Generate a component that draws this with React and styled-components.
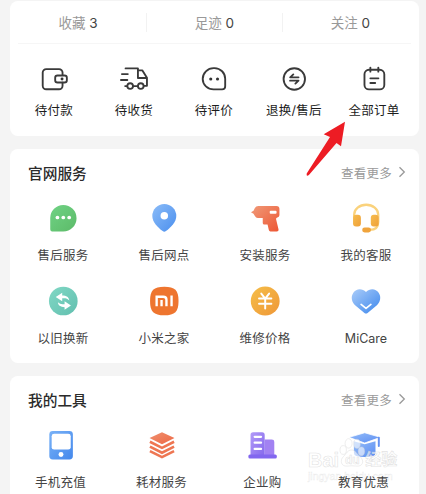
import React from 'react';
import styled, { createGlobalStyle } from 'styled-components';

const GlobalStyle = createGlobalStyle`
  * {
    box-sizing: border-box;
  }

  body {
    margin: 0;
    background: #f4f4f4;
    font-family: "Liberation Sans", "Noto Sans CJK SC", sans-serif;
    overflow: hidden;
  }
`;

// order icons, dark outlines
const WalletIcon = () => (
  <Outline>
    <path d="M25 12V9.8a3.6 3.6 0 0 0-3.6-3.6H8.4a3.6 3.6 0 0 0-3.6 3.6v13.4a3.6 3.6 0 0 0 3.6 3.6h13a3.6 3.6 0 0 0 3.6-3.6V20" />
    <rect x="17.5" y="12.7" width="11.9" height="7.2" rx="2.4" />
    <circle cx="24.5" cy="16.3" r="1.5" fill="#333" stroke="none" />
  </Outline>
);

const TruckIcon = () => (
  <Outline>
    <path d="M7.7 5.5h12.6v9.8H29M20.3 7.5h4.4l4.8 7.6v8.2h-3M7.3 23.5h1.8M15.5 23.5h4.5M4 11.3h6M3 17.3h6.5" />
    <circle cx="12.4" cy="23.5" r="2.9" />
    <circle cx="23.2" cy="23.5" r="2.9" />
  </Outline>
);

const CommentIcon = () => (
  <Outline>
    <path d="M16.9 5.2h-1A11.1 11.1 0 0 0 4.8 16.3c0 6 5 10.6 11.1 10.6h8.6a3.2 3.2 0 0 0 3.2-3.2v-7.6A10.9 10.9 0 0 0 16.9 5.2z" />
    <circle cx="13" cy="16.3" r="1.6" fill="#333" stroke="none" />
    <circle cx="19.9" cy="16.3" r="1.6" fill="#333" stroke="none" />
  </Outline>
);

const RefundIcon = () => (
  <Outline>
    <circle cx="16.6" cy="16.3" r="10.9" />
    <path d="M20.9 14.6h-8.5l3.2-3M12.3 18h8.6l-3.2 3" />
  </Outline>
);

const OrdersIcon = () => (
  <Outline>
    <rect x="6.6" y="6.9" width="20.2" height="20" rx="4.6" />
    <path d="M12.6 4.7v4.1M20.7 4.7v4.1M12.6 15.6h8.2M12.6 20.4h4.9" />
  </Outline>
);

// coloured service icons
const Fill = ({ id, from, to, children }) => (
  <Glyph>
    <defs>
      <linearGradient id={id} x1="0" y1="0" x2="1" y2="1">
        <stop offset="0" stopColor={from} />
        <stop offset="1" stopColor={to} />
      </linearGradient>
    </defs>
    {children}
  </Glyph>
);

const ChatIcon = () => (
  <Fill id="chat" from="#70d385" to="#5cba68">
    <path d="M16.6 3A13.4 13.4 0 0 0 3.3 16.4v11.2C3.3 29 3.9 30 5.3 30h11.3a13.5 13.5 0 0 0 0-27z" fill="url(#chat)" />
    <g fill="#fff">
      <circle cx="10.6" cy="15.8" r="1.9" />
      <circle cx="16.6" cy="15.8" r="1.9" />
      <circle cx="22.6" cy="15.8" r="1.9" />
    </g>
  </Fill>
);

const PinIcon = () => (
  <Fill id="pin" from="#8bbcf8" to="#4b8fee">
    <path d="M16.6 2A12.2 12.2 0 0 0 4.4 14.2c0 6.2 5.6 11.7 10.5 15.4q1.7 1.2 3.4 0c4.9-3.7 10.5-9.2 10.5-15.4A12.2 12.2 0 0 0 16.6 2z" fill="url(#pin)" />
    <circle cx="16.6" cy="14" r="3.8" fill="#fff" />
  </Fill>
);

const DrillIcon = () => (
  <Fill id="drill" from="#f09a78" to="#ed5634">
    <g transform="translate(2 0)">
      <path d="M7.5 4H26q3 0 3 3v6.5q0 2-2.6 2.5-1 .4-.8 1.5l2.5 10.500q.3 2-1.8 2h-6.500q-1.300 0-1.600-1.500l-1.300-5.600h-3.300q-1.600 0-1.600-1.600v-5H7q-2 0-3-2L2.600 12 0 10.500 2.600 9 4 6q1-2 3.500-2z" fill="url(#drill)" />
      <rect x="19.1" y="9" width="7" height="2.9" rx="1" fill="#fff" />
    </g>
  </Fill>
);

const HeadsetIcon = () => (
  <Fill id="headset" from="#f6bd4e" to="#efa039">
    <path d="M4.2 15v-2a12.3 10.2 0 0 1 24.6 0v7.5c0 5.5-3.5 8-8.5 8" fill="none" stroke="#fad27c" strokeWidth="2.3" />
    <rect x="3.1" y="13" width="8" height="12" rx="3" fill="url(#headset)" />
    <rect x="21.2" y="13" width="8" height="12" rx="3" fill="url(#headset)" />
    <rect x="12.4" y="26" width="9" height="5" rx="2.5" fill="#f0a43c" />
  </Fill>
);

const SwapIcon = () => (
  <Fill id="swap" from="#81d8c5" to="#62bfaf">
    <circle cx="16.6" cy="16.3" r="14.6" fill="url(#swap)" />
    <path d="M8.9 12.3l6.6-4.4v2.7c4.3.1 7 1.8 7.2 5.2-1.7-2-4-2.5-7.2-2.2v3zM24.4 20.8l-6.5 4.3v-2.4c-4.2-.2-6.6-1.8-6.8-5 1.8 1.8 3.8 2.2 6.8 1.8v-2.9z" fill="#fff" />
  </Fill>
);

const MiIcon = () => (
  <Glyph>
    <path d="M16.6 1.8C27.5 1.8 31.1 5.4 31.1 16.3S27.5 30.9 16.6 30.9 2.1 27.2 2.1 16.3 5.7 1.8 16.6 1.8z" fill="#ee752f" />
    <path d="M8.8 21.7V12h6.7q3.3 0 3.3 3v6.7M13.8 15.2v6.5M24 10.8v10.9" fill="none" stroke="#fff" strokeWidth="2.4" />
  </Glyph>
);

const YuanIcon = () => (
  <Fill id="yuan" from="#f5be49" to="#ef9737">
    <circle cx="16.5" cy="16.3" r="14.7" fill="url(#yuan)" />
    <path d="M12.5 8.8l4 5 4-5M10.2 13.8h12.6M10.2 19h12.6M16.5 14v10" fill="none" stroke="#fff" strokeWidth="2" strokeLinecap="round" strokeLinejoin="round" />
  </Fill>
);

const HeartIcon = () => (
  <Fill id="heart" from="#aaccf9" to="#3c87ed">
    <path d="M16.3 7.2C12.3 2.8 6.2 3.6 3.4 7.8.4 12.3 1.8 17.3 5.5 20.8l9.2 7.6q1.6 1.3 3.2 0l9.2-7.6c3.7-3.5 5.1-8.5 2.1-13C26.4 3.6 20.3 2.8 16.3 7.2z" fill="url(#heart)" />
    <path d="M11.3 19.8l5 4.1 5-4.1" fill="none" stroke="#fff" strokeWidth="1.7" strokeLinecap="round" strokeLinejoin="round" />
  </Fill>
);

const PhoneIcon = () => (
  <Fill id="phone" from="#79b2f7" to="#4488ec">
    <rect x="4.4" y="2" width="24" height="29" rx="3.5" fill="url(#phone)" />
    <rect x="6.8" y="4.8" width="19.4" height="16.2" rx="2.5" fill="#fff" />
    <circle cx="16.3" cy="26" r="2.5" fill="#fff" />
  </Fill>
);

const LayersIcon = () => (
  <Fill id="layers" from="#ef9170" to="#ee6743">
    <path d="M16.3 3.2L29 9.2l-12.7 6.3L3.6 9.2z" fill="url(#layers)" />
    <path d="M4 13l12.3 6.2L28.6 13M4 18l12.3 6.2L28.6 18M4 22.6l12.3 6 12.3-6" fill="none" stroke="#ee7652" strokeWidth="2.6" />
  </Fill>
);

const BuildingIcon = () => (
  <Fill id="building" from="#b29af8" to="#8468ec">
    <path d="M18 10.8h7.3q2.5 0 2.5 2.5V28H18z" fill="#a282f2" />
    <path d="M3.6 28V5.8q0-2.6 2.6-2.6h9.2Q18 3.2 18 5.8V28z" fill="url(#building)" />
    <path d="M7.8 8h6.5M7.8 14h6.5M7.8 20.3h6.5" stroke="#fff" strokeWidth="2.3" strokeLinecap="round" />
    <rect x="1.4" y="26" width="29" height="4" rx="1.6" fill="#8267ef" />
  </Fill>
);

const HatIcon = () => (
  <Fill id="hat" from="#94bdf9" to="#5c8df2">
    <path d="M6 12.5l11 3 11-3V24q0 3-2.5 3.5-8.5 2-17 0Q6 27 6 24z" fill="url(#hat)" />
    <path d="M17 3.8l16 4.7-16 5.8L1 8.5z" fill="url(#hat)" stroke="#fff" strokeWidth=".8" />
    <path d="M31.4 9v8.3" stroke="#6592f1" strokeWidth="2" strokeLinecap="round" />
  </Fill>
);

const stats = [
  { name: '收藏', value: 3 },
  { name: '足迹', value: 0 },
  { name: '关注', value: 0 },
];

const orders = [
  { name: '待付款', Icon: WalletIcon },
  { name: '待收货', Icon: TruckIcon },
  { name: '待评价', Icon: CommentIcon },
  { name: '退换/售后', Icon: RefundIcon },
  { name: '全部订单', Icon: OrdersIcon },
];

const services = [
  { name: '售后服务', Icon: ChatIcon },
  { name: '售后网点', Icon: PinIcon },
  { name: '安装服务', Icon: DrillIcon },
  { name: '我的客服', Icon: HeadsetIcon },
  { name: '以旧换新', Icon: SwapIcon },
  { name: '小米之家', Icon: MiIcon },
  { name: '维修价格', Icon: YuanIcon },
  { name: 'MiCare', Icon: HeartIcon, latin: true },
];

const tools = [
  { name: '手机充值', Icon: PhoneIcon },
  { name: '耗材服务', Icon: LayersIcon },
  { name: '企业购', Icon: BuildingIcon },
  { name: '教育优惠', Icon: HatIcon },
];

const Section = ({ title, items, inset }) => (
  <Card>
    <Header>
      <Title>{title}</Title>
      <More>
        查看更多
        <Chevron viewBox="0 0 8 12">
          <path d="M1.5 1.2L6.3 6l-4.8 4.8" />
        </Chevron>
      </More>
    </Header>
    <ServiceGrid $inset={inset}>
      {items.map(({ name, Icon, latin }) => (
        <Service key={name}>
          <Icon />
          <Label $latin={latin}>{name}</Label>
        </Service>
      ))}
    </ServiceGrid>
  </Card>
);

// the watermark in the bottom right corner
const Watermark = () => (
  <Mark>
    <MarkTop>
      <MarkText>Bai</MarkText>
      <Paw viewBox="0 0 26 30">
        <ellipse cx="4.2" cy="12" rx="3.2" ry="4.4" />
        <ellipse cx="9.6" cy="5.4" rx="3.5" ry="4.7" />
        <ellipse cx="18" cy="5.8" rx="3.3" ry="4.6" />
        <ellipse cx="22.4" cy="13.3" rx="3.2" ry="4.4" />
        <path d="M12.5 12c4 0 5 3.5 8.5 6.5 5 4.5 2.5 10-3 9.6-3.8-.4-6.8-.4-10 0-6 .5-7.5-5.8-3.5-9.6C7.5 15.5 8.5 12 12.5 12z" />
        <text x="6" y="25.5">du</text>
      </Paw>
      <MarkText $small>经验</MarkText>
    </MarkTop>
    <MarkUrl>jingyan.baidu.com</MarkUrl>
  </Mark>
);

const App = () => (
  <>
    <GlobalStyle />
    <Page>
      <Card>
        <Stats>
          {stats.map(({ name, value }) => (
            <Stat key={name}>
              {name} <Value>{value}</Value>
            </Stat>
          ))}
        </Stats>
        <Divider />
        <Orders>
          {orders.map(({ name, Icon }) => (
            <Order key={name}>
              <Icon />
              <Label $dark>{name}</Label>
            </Order>
          ))}
        </Orders>
      </Card>
      <Section title="官网服务" items={services} inset="2.5px" />
      <Section title="我的工具" items={tools} inset="0" />
      <Arrow viewBox="0 0 44 60">
        <path d="M40 1.8L18.7 14.3l6.3 2.7L1.7 53.5q-.6 3.5 2.2 1.6L31.5 23l4.5 3.3z" />
      </Arrow>
      <Watermark />
    </Page>
  </>
);

const Page = styled.main`
  position: relative;
  width: 426px;
  height: 494px;
  padding: 1px 7px 0 10px;
  display: flex;
  flex-direction: column;
  gap: 13px;
  overflow: hidden;
`;

const Card = styled.section`
  flex-shrink: 0;
  background: #fff;
  border-radius: 8px;
`;

// first card: counters on top, order states below
const Stats = styled.div`
  display: grid;
  grid-template-columns: repeat(3, 136px);
  height: 42px;
`;

const Stat = styled.div`
  height: 19px;
  margin-top: 12px;
  font-size: 13.5px;
  line-height: 20px;
  text-align: center;
  white-space: pre;
  color: #999;

  & + & {
    border-left: 1px solid #f2f2f2;
  }
`;

const Value = styled.span`
  font-family: Inter, sans-serif;
  color: #444;
`;

const Divider = styled.div`
  height: 1px;
  margin: 0 8px;
  background: #f6f6f6;
`;

const Orders = styled.div`
  display: grid;
  grid-template-columns: repeat(5, 80px);
  height: 92px;
  padding: 19px 0 0 4px;
`;

const Order = styled.div`
  display: flex;
  flex-direction: column;
  align-items: center;
  gap: 6px;
`;

// stays above the watermark
const Label = styled.span`
  position: relative;
  z-index: 1;
  font-family: Inter, "Noto Sans CJK SC", sans-serif;
  font-size: 12.5px;
  line-height: 20px;
  letter-spacing: ${(p) => (p.$latin ? '0' : '0.25px')};
  white-space: nowrap;
  color: ${(p) => (p.$dark ? '#1c1c1c' : '#444')};
`;

const Header = styled.header`
  display: flex;
  justify-content: space-between;
  align-items: center;
  height: 46px;
  padding: 0 13px 0 18px;
`;

const Title = styled.h2`
  margin: 0;
  font-size: 14.7px;
  font-weight: 500;
  color: #2b2b2b;
`;

const More = styled.span`
  display: flex;
  align-items: center;
  gap: 6px;
  font-size: 12.5px;
  letter-spacing: 0.25px;
  color: #999;
`;

const Chevron = styled.svg`
  width: 8px;
  height: 12px;
  fill: none;
  stroke: #999;
  stroke-width: 1.3;
`;

const ServiceGrid = styled.div`
  display: grid;
  grid-template-columns: repeat(4, 101px);
  row-gap: 19px;
  padding: 7px 0 14px ${(p) => p.$inset};
`;

const Service = styled.div`
  display: flex;
  flex-direction: column;
  align-items: center;
  gap: 12px;
`;

const Glyph = styled.svg.attrs({ viewBox: '0 0 32.6 32.6' })`
  width: 32px;
  height: 32px;
  overflow: visible;
`;

const Outline = styled(Glyph)`
  fill: none;
  stroke: #3a3a3a;
  stroke-width: 1.9;
  stroke-linecap: round;
  stroke-linejoin: round;
`;

const Arrow = styled.svg`
  position: absolute;
  left: 305px;
  top: 120px;
  width: 44px;
  height: 60px;
  fill: #ed1c24;
`;

const Mark = styled.div`
  position: absolute;
  left: 308px;
  top: 438px;
  width: 92px;
  color: rgba(255, 255, 255, 0.6);
  -webkit-text-stroke: 0.6px rgba(210, 210, 210, 0.65);
`;

const MarkTop = styled.div`
  display: flex;
  align-items: flex-end;
  height: 32px;
`;

const MarkText = styled.span`
  font-size: ${(p) => (p.$small ? '16px' : '20px')};
  line-height: 20px;
  font-weight: bold;
`;

const Paw = styled.svg`
  width: 26px;
  height: 30px;
  margin-bottom: 2px;
  overflow: visible;
  fill: rgba(255, 255, 255, 0.6);
  stroke: rgba(210, 210, 210, 0.65);
  stroke-width: 0.6;
  font-size: 12px;
  font-weight: bold;
`;

const MarkUrl = styled.div`
  font-size: 10.5px;
  line-height: 13px;
  -webkit-text-stroke: 0.4px rgba(215, 215, 215, 0.55);
`;

export default App;
